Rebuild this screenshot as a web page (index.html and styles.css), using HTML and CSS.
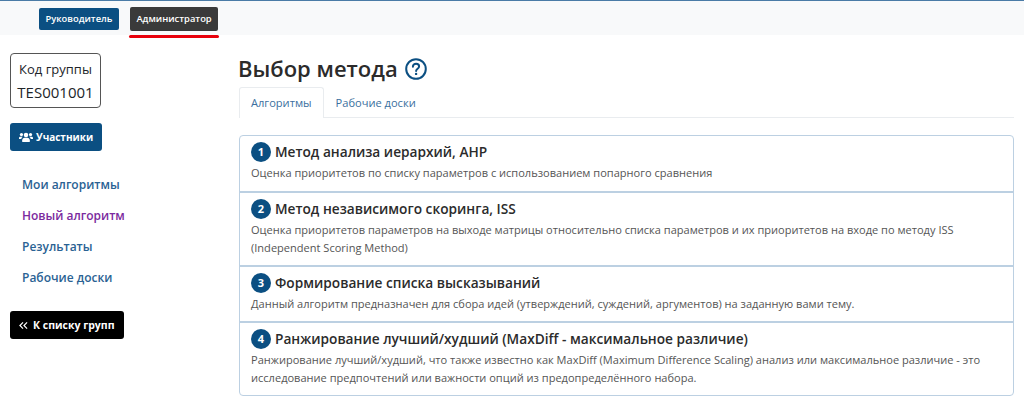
FILE: index.html
```html
<!DOCTYPE html>
<html lang="ru">
<head>
  <meta charset="UTF-8" />
  <title>Выбор метода</title>
  <link rel="stylesheet" href="styles.css">
</head>
<body>

  <div class="topbar">
    <a class="role role-blue">Руководитель</a>
    <a class="role role-active">Администратор</a>
  </div>

  <div class="page">
    <div class="sidebar">
      <div class="group-code">
        <div class="group-label">Код группы</div>
        <div class="group-value">TES001001</div>
      </div>
      <a class="btn btn-blue">
        <svg class="icon-users" viewBox="0 0 20 14" width="14" height="10"><circle cx="10" cy="4" r="3.2"/><path d="M4.6 14v-2.4C4.6 9.4 6.2 8 8 8h4c1.800 0 3.400 1.400 3.400 3.600V14z"/><circle cx="3.500" cy="3.500" r="2.300"/><circle cx="16.500" cy="3.500" r="2.300"/><path d="M0 10V8.500C0 7 1 6.500 2.200 6.500h2.400c.3 0 .6.100.8.300C4.200 7.700 3.400 8.700 3.200 10zM20 10V8.500C20 7 19 6.500 17.800 6.500h-2.400c-.3 0-.6.100-.8.300 1.200.9 2 1.900 2.200 3.200z"/></svg>
        Участники
      </a>
      <div class="side-nav">
        <a class="side-link">Мои алгоритмы</a>
        <a class="side-link side-link-active">Новый алгоритм</a>
        <a class="side-link">Результаты</a>
        <a class="side-link">Рабочие доски</a>
      </div>
      <a class="btn btn-black">
        <svg class="icon-back" viewBox="0 0 10 10" width="9" height="9"><path d="M4.500 1.500 1 5l3.500 3.500M9 1.500 5.500 5 9 8.500"/></svg>
        К списку групп
      </a>
    </div>

    <div class="content">
      <h1 class="title">Выбор метода
        <svg class="icon-help" viewBox="0 0 22 22" width="22" height="22"><circle cx="11" cy="11" r="9.800"/><path d="M7.900 8.700c0-1.900 1.400-3 3.200-3 1.700 0 3 1 3 2.700 0 2.300-3 2.300-3 4.500"/><circle class="dot" cx="11.100" cy="15.900" r="1.200"/></svg>
      </h1>
      <div class="tabs">
        <a class="tab tab-active">Алгоритмы</a>
        <a class="tab">Рабочие доски</a>
      </div>

      <div class="methods">
        <div class="method">
          <div class="method-head"><span class="num">1</span>Метод анализа иерархий, AHP</div>
          <p class="method-text">Оценка приоритетов по списку параметров с использованием попарного сравнения</p>
        </div>
        <div class="method">
          <div class="method-head"><span class="num">2</span>Метод независимого скоринга, ISS</div>
          <p class="method-text">Оценка приоритетов параметров на выходе матрицы относительно списка параметров и их приоритетов на входе по методу ISS (Independent Scoring Method)</p>
        </div>
        <div class="method">
          <div class="method-head"><span class="num">3</span>Формирование списка высказываний</div>
          <p class="method-text">Данный алгоритм предназначен для сбора идей (утверждений, суждений, аргументов) на заданную вами тему.</p>
        </div>
        <div class="method">
          <div class="method-head"><span class="num">4</span>Ранжирование лучший/худший (MaxDiff - максимальное различие)</div>
          <p class="method-text">Ранжирование лучший/худший, что также известно как MaxDiff (Maximum Difference Scaling) анализ или максимальное различие - это исследование предпочтений или важности опций из предопределённого набора.</p>
        </div>
      </div>
    </div>
  </div>

</body>
</html>
```

FILE: styles.css
```css
body {
  margin: 0;
  font-family: "Open Sans", "Noto Sans", sans-serif;
  background-color: white;
  color: #212529;
  overflow: hidden;
}

.topbar {
  display: flex;
  align-items: center;
  height: 34px;
  padding-left: 39px;
  gap: 11px;
  background-color: #f8f9fa;
  border-top: 1px solid #4a7ba6;
}

.role {
  font-size: 9.400px;
  font-weight: 600;
  color: white;
  border-radius: 2px;
  line-height: 22px;
  padding: 0 6.500px;
  margin-top: 1px;
}

.role-blue {
  background-color: #0b4f82;
}

.role-active {
  position: relative;
  background-color: #3a3a3a;
  line-height: 24px;
}

.role-active::after {
  content: "";
  position: absolute;
  left: -1px;
  right: -1px;
  bottom: -7px;
  height: 3px;
  border-radius: 2px;
  background-color: #e8000b;
}

.page {
  display: flex;
}

.sidebar {
  width: 239px;
  flex-shrink: 0;
  padding: 18px 0 0 10px;
  box-sizing: border-box;
}

.group-code {
  width: 91px;
  height: 55px;
  box-sizing: border-box;
  border: 1px solid #555;
  border-radius: 4px;
  text-align: center;
  padding-top: 6px;
}

.group-label {
  font-size: 13px;
  line-height: 18px;
}

.group-value {
  font-size: 15px;
  font-weight: 500;
  line-height: 22px;
  margin-top: 3px;
}

.btn {
  display: flex;
  width: fit-content;
  align-items: center;
  gap: 3px;
  height: 28px;
  padding: 0 9px;
  border-radius: 3px;
  color: white;
  font-size: 10.500px;
  font-weight: 700;
  box-sizing: border-box;
}

.btn-blue {
  background-color: #0b4f82;
  margin-top: 15px;
  font-size: 10px;
}

.btn-black {
  background-color: black;
  margin-top: 23px;
}

.icon-users {
  fill: white;
}

.icon-back {
  fill: none;
  stroke: white;
  stroke-width: 1.300;
  margin-right: 2px;
}

.side-nav {
  display: flex;
  flex-direction: column;
  gap: 10px;
  padding: 23px 0 0 12px;
}

.side-link {
  font-size: 12px;
  font-weight: 600;
  line-height: 21px;
  color: #2a6293;
}

.side-link-active {
  color: #7b2a9e;
}

.content {
  width: 775px;
}

.title {
  display: flex;
  align-items: center;
  gap: 7px;
  margin: 0 0 0 -1px;
  padding-top: 15px;
  font-size: 22px;
  font-weight: 600;
  line-height: 36px;
  color: #2b2b2b;
}

.icon-help {
  fill: none;
  stroke: #0b4f82;
  stroke-width: 2;
  stroke-linecap: round;
  margin-top: 1px;
}

.icon-help .dot {
  fill: #0b4f82;
  stroke: none;
}

.tabs {
  display: flex;
  height: 30px;
  margin-top: 1px;
  border-bottom: 1px solid #e9ecef;
}

.tab {
  font-size: 11.100px;
  line-height: 30px;
  padding: 0 11px;
  color: #3a6f9e;
  border: 1px solid transparent;
  border-bottom: none;
  height: 30px;
}

.tab-active {
  background-color: white;
  border-color: #e9ecef;
  border-radius: 3px 3px 0 0;
}

.methods {
  margin-top: 17px;
  border: 1px solid #bcd0e2;
  border-radius: 4px;
}

.method {
  padding: 5px 11px 8px;
  border-top: 2px solid #bcd0e2;
}

.method:first-child {
  border-top: none;
  padding-bottom: 9px;
}

.method-head {
  display: flex;
  align-items: center;
  gap: 4px;
  font-size: 13.700px;
  font-weight: 600;
  line-height: 22px;
  color: #2b2b2b;
}

.num {
  display: flex;
  align-items: center;
  justify-content: center;
  width: 20px;
  height: 20px;
  border-radius: 50%;
  background-color: #0b4f82;
  color: white;
  font-size: 11px;
  font-weight: 700;
}

.method-text {
  margin: 1px 0 0;
  font-size: 11.050px;
  line-height: 18px;
  color: #555;
}
```
